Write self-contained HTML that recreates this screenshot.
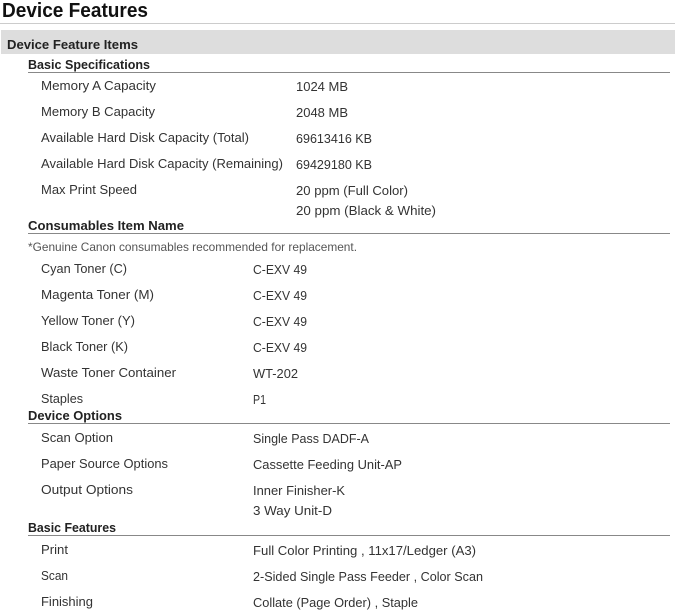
<!DOCTYPE html>
<html lang="en">
<head>
<meta charset="utf-8">
<title>Device Features</title>
<style>
html,body{margin:0;padding:0;background:#fff;width:675px;height:612px;overflow:hidden}
svg{display:block;font-family:"Liberation Sans",sans-serif}
text{font-size:13px;fill:#333}
.h{font-weight:bold;font-size:13px;fill:#222}
.n{font-size:12px;fill:#555}
</style>
</head>
<body>
<svg width="675" height="612" viewBox="0 0 675 612" xmlns="http://www.w3.org/2000/svg">
<text lengthAdjust="spacingAndGlyphs" x="2" y="17" textLength="146" style="font-size:20px;font-weight:bold;fill:#111">Device Features</text>
<rect x="0" y="23" width="675" height="1" fill="#ccc"/>
<rect x="1" y="30" width="674" height="24" fill="#ddd"/>
<text lengthAdjust="spacingAndGlyphs" class="h" x="7" y="49" textLength="131">Device Feature Items</text>

<text lengthAdjust="spacingAndGlyphs" class="h" x="28" y="69" textLength="122">Basic Specifications</text>
<rect x="28" y="72" width="642" height="1" fill="#888"/>
<text lengthAdjust="spacingAndGlyphs" x="41" y="90" textLength="115">Memory A Capacity</text><text lengthAdjust="spacingAndGlyphs" x="296" y="91" textLength="52">1024 MB</text>
<text lengthAdjust="spacingAndGlyphs" x="41" y="116" textLength="114">Memory B Capacity</text><text lengthAdjust="spacingAndGlyphs" x="296" y="117" textLength="52">2048 MB</text>
<text lengthAdjust="spacingAndGlyphs" x="41" y="142" textLength="208">Available Hard Disk Capacity (Total)</text><text lengthAdjust="spacingAndGlyphs" x="296" y="143" textLength="76">69613416 KB</text>
<text lengthAdjust="spacingAndGlyphs" x="41" y="168" textLength="242">Available Hard Disk Capacity (Remaining)</text><text lengthAdjust="spacingAndGlyphs" x="296" y="169" textLength="76">69429180 KB</text>
<text lengthAdjust="spacingAndGlyphs" x="41" y="194" textLength="96">Max Print Speed</text><text lengthAdjust="spacingAndGlyphs" x="296" y="195" textLength="112">20 ppm (Full Color)</text>
<text lengthAdjust="spacingAndGlyphs" x="296" y="215" textLength="140">20 ppm (Black &amp; White)</text>

<text lengthAdjust="spacingAndGlyphs" class="h" x="28" y="230" textLength="156">Consumables Item Name</text>
<rect x="28" y="233" width="642" height="1" fill="#888"/>
<text lengthAdjust="spacingAndGlyphs" class="n" x="28" y="251" textLength="329">*Genuine Canon consumables recommended for replacement.</text>
<text lengthAdjust="spacingAndGlyphs" x="41" y="273" textLength="86">Cyan Toner (C)</text><text lengthAdjust="spacingAndGlyphs" x="253" y="274" textLength="54">C-EXV 49</text>
<text lengthAdjust="spacingAndGlyphs" x="41" y="299" textLength="113">Magenta Toner (M)</text><text lengthAdjust="spacingAndGlyphs" x="253" y="300" textLength="54">C-EXV 49</text>
<text lengthAdjust="spacingAndGlyphs" x="41" y="325" textLength="94">Yellow Toner (Y)</text><text lengthAdjust="spacingAndGlyphs" x="253" y="326" textLength="54">C-EXV 49</text>
<text lengthAdjust="spacingAndGlyphs" x="41" y="351" textLength="87">Black Toner (K)</text><text lengthAdjust="spacingAndGlyphs" x="253" y="352" textLength="54">C-EXV 49</text>
<text lengthAdjust="spacingAndGlyphs" x="41" y="377" textLength="135">Waste Toner Container</text><text lengthAdjust="spacingAndGlyphs" x="253" y="378" textLength="45">WT-202</text>
<text lengthAdjust="spacingAndGlyphs" x="41" y="403" textLength="42">Staples</text><text lengthAdjust="spacingAndGlyphs" x="253" y="404" textLength="13">P1</text>

<text lengthAdjust="spacingAndGlyphs" class="h" x="28" y="420" textLength="94">Device Options</text>
<rect x="28" y="423" width="642" height="1" fill="#888"/>
<text lengthAdjust="spacingAndGlyphs" x="41" y="442" textLength="72">Scan Option</text><text lengthAdjust="spacingAndGlyphs" x="253" y="443" textLength="116">Single Pass DADF-A</text>
<text lengthAdjust="spacingAndGlyphs" x="41" y="468" textLength="127">Paper Source Options</text><text lengthAdjust="spacingAndGlyphs" x="253" y="469" textLength="149">Cassette Feeding Unit-AP</text>
<text lengthAdjust="spacingAndGlyphs" x="41" y="494" textLength="92">Output Options</text><text lengthAdjust="spacingAndGlyphs" x="253" y="495" textLength="92">Inner Finisher-K</text>
<text lengthAdjust="spacingAndGlyphs" x="253" y="515" textLength="79">3 Way Unit-D</text>

<text lengthAdjust="spacingAndGlyphs" class="h" x="28" y="532" textLength="88">Basic Features</text>
<rect x="28" y="535" width="642" height="1" fill="#888"/>
<text lengthAdjust="spacingAndGlyphs" x="41" y="554" textLength="27">Print</text><text lengthAdjust="spacingAndGlyphs" x="253" y="555" textLength="223">Full Color Printing , 11x17/Ledger (A3)</text>
<text lengthAdjust="spacingAndGlyphs" x="41" y="580" textLength="27">Scan</text><text lengthAdjust="spacingAndGlyphs" x="253" y="581" textLength="230">2-Sided Single Pass Feeder , Color Scan</text>
<text lengthAdjust="spacingAndGlyphs" x="41" y="606" textLength="52">Finishing</text><text lengthAdjust="spacingAndGlyphs" x="253" y="607" textLength="165">Collate (Page Order) , Staple</text>
</svg>
</body>
</html>
